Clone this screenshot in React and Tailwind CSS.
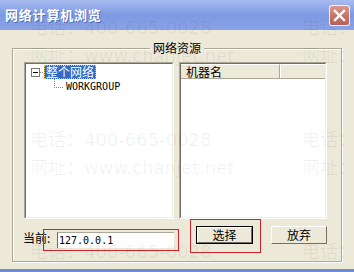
const cjk = "font-['SimSun','Noto_Sans_CJK_SC',sans-serif]";

function CloseButton() {
  return (
    <div className="w-[21px] h-[21px] rounded-[3px] border border-white/90 bg-gradient-to-b from-[#d99a8c] via-[#c97569] to-[#b9625a] flex items-center justify-center">
      <svg width="13" height="13" viewBox="0 0 13 13">
        <path d="M2 2 L11 11 M11 2 L2 11" stroke="#fff" strokeWidth="2.4" strokeLinecap="square" />
      </svg>
    </div>
  );
}

function Sunken({ className, children }) {
  return (
    <div className={`border border-t-[#ACA899] border-l-[#ACA899] border-b-white border-r-white ${className}`}>
      <div className="h-full border border-t-[#716F64] border-l-[#716F64] border-b-[#F1EFE2] border-r-[#F1EFE2] bg-white">
        {children}
      </div>
    </div>
  );
}

function Button({ label, isDefault }) {
  return (
    <div className={`h-[18px] ${isDefault ? 'border border-black' : ''}`}>
      <div className="h-full border border-t-white border-l-white border-b-[#716F64] border-r-[#716F64] bg-[#ECE9D8] flex items-center justify-center leading-none text-[12px]">
        {label}
      </div>
    </div>
  );
}

function Watermark({ left, top }) {
  return (
    <div
      className="absolute text-[18px] leading-[28px] text-black/[0.06] whitespace-nowrap font-['DejaVu_Sans','Noto_Sans_CJK_SC',sans-serif]"
      style={{ left, top }}
    >
      <div>电话：400-665-0028</div>
      <div>网址：www.chanjet.net</div>
    </div>
  );
}

export default function App() {
  return (
    <div className={`relative w-[354px] h-[272px] overflow-hidden bg-[#ECE9D8] text-black ${cjk}`}>
      {/* title bar */}
      <div className="h-[30px] flex items-center justify-between pl-[5px] pr-[4px] bg-gradient-to-b from-[#a9bcf0] via-[#7d99e2] to-[#8aa3e6]">
        <span className="text-white font-bold text-[13px] tracking-[0.8px] [text-shadow:1px_1px_0_rgba(40,60,130,0.5)]">
          网络计算机浏览
        </span>
        <CloseButton />
      </div>

      {/* body */}
      <div className="h-[239px] pt-[18px] pl-[12px] pr-[12px]">
        <div className="relative h-[214px] border border-[#ACA899] shadow-[inset_1px_1px_0_#fff,1px_1px_0_#fff]">
          <span className="absolute left-1/2 -translate-x-1/2 -top-[8px] bg-[#ECE9D8] px-[3px] text-[12px] leading-[14px]">
            网络资源
          </span>

          <div className="flex gap-[5px] pl-[11px] pt-[13px]">
            {/* tree */}
            <Sunken className="w-[150px] h-[157px]">
              <div className="flex items-center h-[14px] mt-[1px]">
                <div className="ml-[5px] w-[9px] h-[9px] border border-[#7A7A7A] bg-white flex items-center justify-center">
                  <div className="w-[5px] h-[1px] bg-black" />
                </div>
                <svg width="4" height="1">
                  <line x1="0" y1="0.5" x2="4" y2="0.5" stroke="#808080" strokeDasharray="1 1" />
                </svg>
                <div className="h-[14px] px-[2px] bg-[#316AC5] text-white text-[12px] leading-[14px] outline outline-1 outline-dotted outline-[#f0c060] -outline-offset-1">
                  整个网络
                </div>
              </div>
              <div className="flex items-start h-[14px]">
                <svg width="11" height="14" className="ml-[28px]">
                  <line x1="0.5" y1="0" x2="0.5" y2="8" stroke="#808080" strokeDasharray="1 1" />
                  <line x1="0" y1="8.5" x2="10" y2="8.5" stroke="#808080" strokeDasharray="1 1" />
                </svg>
                <span className="font-['DejaVu_Sans_Mono',monospace] text-[10px] leading-[16px] ml-[1px]">WORKGROUP</span>
              </div>
            </Sunken>

            {/* list */}
            <Sunken className="w-[148px] h-[157px]">
              <div className="flex h-[15px] bg-[#ECE9D8] border-b border-[#ACA899]">
                <div className="w-[99px] pl-[5px] text-[12px] leading-[14px] border-r border-[#ACA899] shadow-[1px_0_0_#fff] border-t border-t-white">
                  机器名
                </div>
                <div className="flex-1 border-t border-t-white" />
              </div>
            </Sunken>
          </div>

          {/* bottom row */}
          <div className="flex items-start mt-[7px] pl-[10px]">
            <span className="text-[12px] leading-[14px] mt-[5px] w-[34px]">当前:</span>
            <div className="mt-[6px] w-[117px] h-[16px] bg-white border-l border-t border-l-[#716F64] border-t-[#ACA899] font-['DejaVu_Sans_Mono',monospace] text-[10px] leading-[15px] pl-[1px]">
              127.0.0.1
            </div>
            <div className="ml-[22px] w-[57px]">
              <Button label="选择" isDefault />
            </div>
            <div className="ml-[18px] w-[56px]">
              <Button label="放弃" />
            </div>
          </div>
        </div>
      </div>

      {/* bottom frame */}
      <div className="h-[3px] bg-[#6f8ad6]" />

      {/* annotations */}
      <div className="absolute left-[43px] top-[229px] w-[136px] h-[22px] border-[1.5px] border-[#c8262a] pointer-events-none" />
      <div className="absolute left-[190px] top-[219px] w-[71px] h-[34px] border-[1.5px] border-[#c8262a] pointer-events-none" />

      {/* watermark */}
      <div className="absolute inset-0 pointer-events-none">
        <Watermark left={30} top={14} />
        <Watermark left={302} top={14} />
        <Watermark left={30} top={126} />
        <Watermark left={302} top={126} />
        <Watermark left={30} top={238} />
        <Watermark left={302} top={238} />
      </div>
    </div>
  );
}
